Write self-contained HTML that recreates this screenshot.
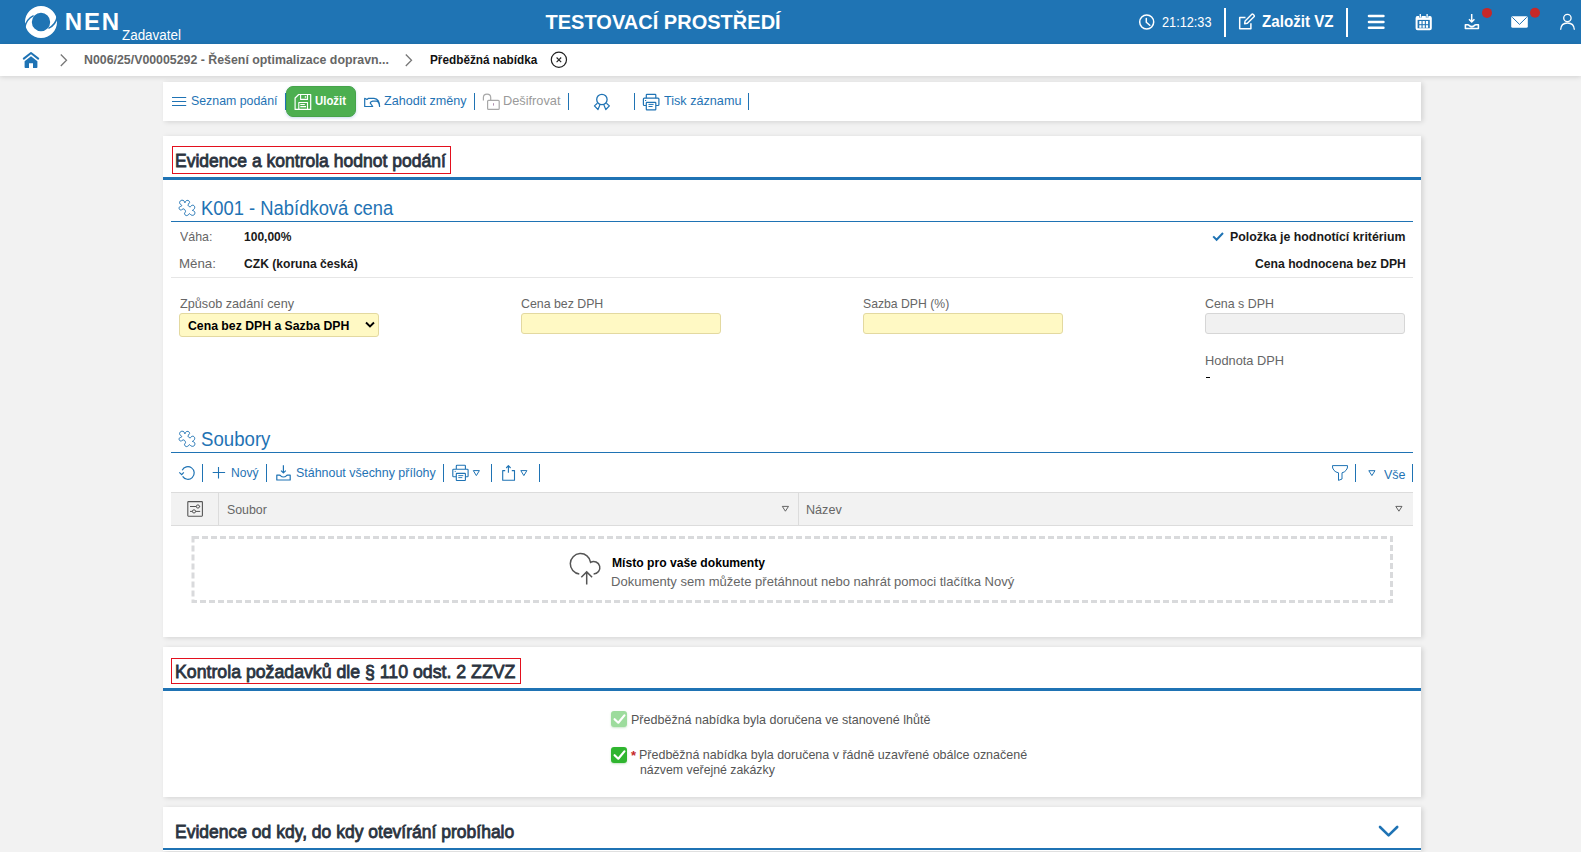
<!DOCTYPE html>
<html lang="cs"><head><meta charset="utf-8"><title>NEN – Předběžná nabídka</title>
<style>
*{box-sizing:border-box;margin:0;padding:0}
html,body{width:1581px;height:852px;overflow:hidden}
body{background:#f2f2f2;font-family:"Liberation Sans",sans-serif;position:relative}
.a{position:absolute}
.t{position:absolute;white-space:nowrap;transform-origin:0 0;font-family:"Liberation Sans",sans-serif}
.card{position:absolute;left:163px;width:1258px;background:#fff;box-shadow:2px 1px 5px rgba(0,0,0,.13)}
.sep{position:absolute;width:1px;background:#1f73b4}
.hsep{position:absolute;width:2px;background:#fff}
.inp{position:absolute;height:21px;width:200px;background:#fff9c4;border:1px solid #e3d9a0;border-radius:3px}
#ov{position:absolute;left:0;top:0;overflow:visible}
</style></head><body>

<!-- header & breadcrumb -->
<div class="a" style="left:0;top:0;width:1581px;height:44px;background:#1f74b4"></div>
<div class="a" style="left:0;top:44px;width:1581px;height:32px;background:#fff;box-shadow:0 1px 5px rgba(0,0,0,.14)"></div>
<div class="hsep" style="left:1224px;top:8px;height:29px"></div>
<div class="hsep" style="left:1346px;top:8px;height:29px"></div>

<!-- toolbar card -->
<div class="card" style="top:82px;height:39px"></div>
<div class="sep" style="left:285px;top:93px;height:17px"></div>
<div class="a" style="left:286px;top:86px;width:70px;height:31px;border-radius:7px;background:#4caf50;border:1px solid #46a34a;box-shadow:0 1px 3px rgba(31,115,180,.25)"></div>
<div class="sep" style="left:474px;top:93px;height:17px"></div>
<div class="sep" style="left:568px;top:93px;height:17px"></div>
<div class="sep" style="left:634px;top:93px;height:17px"></div>
<div class="sep" style="left:748px;top:93px;height:17px"></div>

<!-- card 1 -->
<div class="card" style="top:136px;height:501px"></div>
<div class="a" style="left:172px;top:146px;width:279px;height:28px;border:1px solid #e3101e"></div>
<div class="a" style="left:163px;top:177px;width:1258px;height:3px;background:#1f73b4"></div>
<div class="a" style="left:171px;top:220.5px;width:1242px;height:1.5px;background:#1f73b4"></div>
<div class="a" style="left:171px;top:277px;width:1242px;height:1px;background:#e6e6e6"></div>
<div class="inp" style="left:179px;top:313px;height:24px"></div>
<div class="inp" style="left:521px;top:313px"></div>
<div class="inp" style="left:863px;top:313px"></div>
<div class="inp" style="left:1205px;top:313px;background:#f1f1f1;border-color:#d6d6d6"></div>
<div class="a" style="left:1206px;top:377px;width:4px;height:1px;background:#000"></div>

<div class="a" style="left:171px;top:451.5px;width:1242px;height:1.5px;background:#1f73b4"></div>
<div class="sep" style="left:202px;top:464px;height:18px"></div>
<div class="sep" style="left:266px;top:464px;height:18px"></div>
<div class="sep" style="left:443px;top:464px;height:18px"></div>
<div class="sep" style="left:491px;top:464px;height:18px"></div>
<div class="sep" style="left:539px;top:464px;height:18px"></div>
<div class="sep" style="left:1355px;top:464px;height:18px"></div>
<div class="sep" style="left:1412px;top:464px;height:18px"></div>

<div class="a" style="left:171px;top:492px;width:1242px;height:34px;background:#f2f2f2;border-top:1px solid #dcdcdc;border-bottom:1px solid #dcdcdc"></div>
<div class="a" style="left:218px;top:492px;width:1px;height:34px;background:#dcdcdc"></div>
<div class="a" style="left:798px;top:492px;width:1px;height:34px;background:#dcdcdc"></div>


<!-- card 2 -->
<div class="card" style="top:647px;height:150px"></div>
<div class="a" style="left:171px;top:658px;width:350px;height:26px;border:1px solid #e3101e"></div>
<div class="a" style="left:163px;top:688px;width:1258px;height:3px;background:#1f73b4"></div>
<div class="a" style="left:611px;top:711px;width:16px;height:16px;border-radius:3px;background:#9ddc9d;box-shadow:0 1px 2px rgba(60,160,60,.25)"></div>
<div class="a" style="left:611px;top:747px;width:16px;height:16px;border-radius:3px;background:#2fb52f;box-shadow:0 1px 2px rgba(60,160,60,.3)"></div>

<!-- card 3 -->
<div class="card" style="top:807px;height:44px"></div>
<div class="a" style="left:163px;top:848px;width:1258px;height:2px;background:#1f73b4"></div>

<svg id="ov" width="1581" height="852" viewBox="0 0 1581 852">
<g fill="none" stroke-linejoin="round">
 <!-- logo -->
 <circle cx="41" cy="22" r="12.6" stroke="#fff" stroke-width="6.8"/>
 <path d="M24.6 28 Q26.2 19 33.6 15.6" stroke="#1f74b4" stroke-width="1.5"/>
 <path d="M57.4 16 Q55.8 25 48.4 28.4" stroke="#1f74b4" stroke-width="1.5"/>
 <!-- clock -->
 <circle cx="1146.7" cy="22" r="7" stroke="#fff" stroke-width="1.5"/>
 <path d="M1146.3 18.6 V22.2 L1149.8 25.3" stroke="#fff" stroke-width="1.5" stroke-linecap="round"/>
 <!-- edit -->
 <path d="M1245.5 17.5 H1239.7 V28.7 H1250.9 V23.2" stroke="#fff" stroke-width="1.5"/>
 <path d="M1244.6 23.7 L1245.1 20.9 L1251.6 14.4 Q1252.4 13.6 1253.3 14.5 L1254 15.2 Q1254.8 16 1254 16.8 L1247.4 23.3 Z" stroke="#fff" stroke-width="1.4"/>
 <!-- hamburger -->
 <path d="M1369 16 H1383.4 M1369 22 H1383.4 M1369 27.8 H1383.4" stroke="#fff" stroke-width="2.6" stroke-linecap="round"/>
 <!-- calendar -->
 <rect x="1416.6" y="17" width="14.2" height="12.2" rx="1" stroke="#fff" stroke-width="2"/>
 <rect x="1416.6" y="16.5" width="14.2" height="3.4" fill="#fff" stroke="none"/>
 <path d="M1420.3 13.8 V17.5 M1427.1 13.8 V17.5" stroke="#1f74b4" stroke-width="2.6"/>
 <path d="M1420.3 13.9 V17.5 M1427.1 13.9 V17.5" stroke="#fff" stroke-width="1.3"/>
 <g fill="#fff" stroke="none">
  <rect x="1419.3" y="21" width="2.2" height="3.2"/><rect x="1422.6" y="21" width="2.2" height="3.2"/><rect x="1425.9" y="21" width="2.2" height="3.2"/>
  <rect x="1419.3" y="25.2" width="2.2" height="2.6"/><rect x="1422.6" y="25.2" width="2.2" height="2.6"/><rect x="1425.9" y="25.2" width="2.2" height="2.6"/>
 </g>
 <!-- download tray -->
 <path d="M1471.7 14 V21.8 M1469 19.3 L1471.7 22 L1474.4 19.3" stroke="#fff" stroke-width="1.5"/>
 <path d="M1465.4 24.7 H1467.6 Q1468.6 24.7 1469.4 25.6 Q1470.4 26.6 1471.8 26.6 Q1473.2 26.6 1474.2 25.6 Q1475 24.7 1476 24.7 H1478.4 V28.5 H1465.4 Z" stroke="#fff" stroke-width="1.6"/>
 <circle cx="1487" cy="12.9" r="5" fill="#c62828" stroke="none"/>
 <!-- mail -->
 <rect x="1511.2" y="16.3" width="16.6" height="11.4" rx="1.5" fill="#fff" stroke="none"/>
 <path d="M1512.3 17.3 L1519.5 24.4 L1526.7 17.3" stroke="#1f74b4" stroke-width="1"/>
 <circle cx="1535" cy="12.8" r="5" fill="#c62828" stroke="none"/>
 <!-- user -->
 <circle cx="1567.4" cy="18" r="3.7" stroke="#fff" stroke-width="1.3"/>
 <path d="M1560.6 29.8 Q1561 23 1567.5 23 Q1574 23 1574.4 29.8" stroke="#fff" stroke-width="1.3"/>

 <!-- breadcrumb -->
 <path d="M23.8 58.6 L31 53 L38.2 58.6" stroke="#1f73b4" stroke-width="2" stroke-linecap="round"/>
 <path d="M24.6 61.2 L31 56.2 L37.4 61.2 V67.2 Q37.4 68 36.6 68 H33 V63.2 H29 V68 H25.4 Q24.6 68 24.6 67.2 Z" fill="#1f73b4" stroke="none"/>
 <path d="M60.8 54.5 L66.5 60.2 L60.8 66" stroke="#777" stroke-width="1.3" stroke-linejoin="miter"/>
 <path d="M405.8 54.5 L411.5 60.2 L405.8 66" stroke="#777" stroke-width="1.3" stroke-linejoin="miter"/>
 <circle cx="558.9" cy="59.8" r="7.6" stroke="#222" stroke-width="1.2"/>
 <path d="M556.6 57.5 L561.2 62.1 M561.2 57.5 L556.6 62.1" stroke="#222" stroke-width="1.1"/>

 <!-- toolbar -->
 <path d="M172 97.5 H186.2 M172 101.5 H186.2 M172 105.5 H186.2" stroke="#1f73b4" stroke-width="1.1"/>
 <path d="M295.1 98 L298.7 94.5 H310.7 V109.4 H295.1 Z" stroke="#fff" stroke-width="1.2"/>
 <path d="M300.6 94.5 V99.4 H307.5 V94.5" stroke="#fff" stroke-width="1.1"/>
 <rect x="304.8" y="96.2" width="1.4" height="1.5" fill="#fff" stroke="none"/>
 <path d="M298.8 109.4 V102.5 H307.5 V109.4 M300.3 104.5 H304.8 M300.3 106.6 H306" stroke="#fff" stroke-width="1.1"/>
 <path d="M364.7 106.5 V98.3 L367 99.5 L368.5 98.3 H374 Q379.6 99 379.6 106.5 Q379 101 376 101.2 H372.8 Q370.2 101.8 370.3 103.2 L372.7 106.5 Z" stroke="#1f73b4" stroke-width="1.2"/>
 <path d="M483.4 100.6 V97.5 Q483.4 94.1 487 94.1 Q490.7 94.1 490.7 97.5 V100.3" stroke="#a8a8a8" stroke-width="1.2"/>
 <rect x="487.6" y="100.3" width="11.6" height="9.1" rx="1" fill="#fff" stroke="#a8a8a8" stroke-width="1.2"/>
 <path d="M493.5 103.2 V105.6" stroke="#b090b0" stroke-width="1"/>
 <circle cx="601.9" cy="99.5" r="5.2" stroke="#1f73b4" stroke-width="1.3"/>
 <path d="M597.4 103.3 L594.4 105.9 L598 109.5 L599.9 105 M606.4 103.3 L609.4 105.9 L605.8 109.5 L603.9 105" stroke="#1f73b4" stroke-width="1.2"/>
 <path d="M646.3 98.2 V95 Q646.3 94.3 647 94.3 H655.1 Q655.8 94.3 655.8 95 V98.2" stroke="#1f73b4" stroke-width="1.2"/>
 <path d="M646.2 105.5 H644.3 Q643.4 105.5 643.4 104.6 V99.1 Q643.4 98.2 644.3 98.2 H658 Q658.9 98.2 658.9 99.1 V104.6 Q658.9 105.5 658 105.5 H655.8" stroke="#1f73b4" stroke-width="1.2"/>
 <rect x="646.3" y="102.3" width="9.5" height="7.5" rx="0.6" fill="#fff" stroke="#1f73b4" stroke-width="1.2"/>
 <path d="M648.5 104.4 H653.6 M648.5 106.5 H652.6 M645 100.5 H646.2" stroke="#1f73b4" stroke-width="1"/>

 <!-- card1 icons -->
 <path d="M181.94 205.53 C181.94 205.53 179.88 203.98 179.62 203.20 C179.36 202.43 179.96 201.37 180.39 200.88 C180.82 200.38 181.60 200.23 182.20 200.23 C182.80 200.23 183.60 200.51 184.01 200.88 C184.42 201.24 184.48 202.08 184.66 202.43 C184.83 202.77 185.04 202.94 185.04 202.94 C185.04 202.94 185.22 201.82 185.56 201.39 C185.91 200.96 186.55 200.45 187.11 200.36 C187.67 200.27 188.49 200.57 188.92 200.88 C189.35 201.18 189.65 201.82 189.70 202.17 C189.74 202.51 189.39 202.60 189.18 202.94 C188.96 203.29 188.58 203.80 188.40 204.24 C188.23 204.67 188.02 205.14 188.14 205.53 C188.27 205.91 188.79 206.35 189.18 206.56 C189.57 206.78 190.47 206.82 190.47 206.82 C190.47 206.82 191.03 205.79 191.50 205.53 C191.98 205.27 192.80 205.10 193.31 205.27 C193.83 205.44 194.39 206.09 194.60 206.56 C194.82 207.03 194.73 207.64 194.60 208.11 C194.48 208.58 194.22 209.02 193.83 209.40 C193.44 209.79 192.28 210.44 192.28 210.44 C192.28 210.44 193.40 210.61 193.83 210.95 C194.26 211.30 194.78 211.90 194.86 212.50 C194.95 213.11 194.73 214.10 194.35 214.57 C193.96 215.04 193.10 215.30 192.54 215.35 C191.98 215.39 191.50 215.13 190.99 214.83 C190.47 214.53 189.44 213.54 189.44 213.54 C189.44 213.54 188.88 214.48 188.40 214.83 C187.93 215.17 187.15 215.60 186.59 215.60 C186.03 215.60 185.39 215.22 185.04 214.83 C184.70 214.44 184.44 213.84 184.53 213.28 C184.61 212.72 185.56 212.12 185.56 211.47 C185.56 210.82 184.96 209.83 184.53 209.40 C184.10 208.97 183.45 208.80 182.98 208.89 C182.50 208.97 181.68 209.92 181.68 209.92 C181.68 209.92 180.57 210.18 180.13 209.92 C179.70 209.66 179.19 208.89 179.10 208.37 C179.01 207.85 179.27 207.16 179.62 206.82 C179.96 206.47 180.78 206.52 181.17 206.30 C181.56 206.09 181.94 205.53 181.94 205.53 Z" stroke="#1f73b4" stroke-width="1"/>
 <path d="M1213.2 236.4 L1216.6 239.8 L1223 233" stroke="#1f73b4" stroke-width="2" stroke-linejoin="miter"/>
 <path d="M366 322.5 L370 326.5 L374 322.5" stroke="#000" stroke-width="1.9" stroke-linejoin="miter"/>

 <!-- soubory -->
 <path d="M181.94 436.53 C181.94 436.53 179.88 434.98 179.62 434.20 C179.36 433.43 179.96 432.37 180.39 431.88 C180.82 431.38 181.60 431.23 182.20 431.23 C182.80 431.23 183.60 431.51 184.01 431.88 C184.42 432.24 184.48 433.08 184.66 433.43 C184.83 433.77 185.04 433.94 185.04 433.94 C185.04 433.94 185.22 432.82 185.56 432.39 C185.91 431.96 186.55 431.45 187.11 431.36 C187.67 431.27 188.49 431.57 188.92 431.88 C189.35 432.18 189.65 432.82 189.70 433.17 C189.74 433.51 189.39 433.60 189.18 433.94 C188.96 434.29 188.58 434.80 188.40 435.24 C188.23 435.67 188.02 436.14 188.14 436.53 C188.27 436.91 188.79 437.35 189.18 437.56 C189.57 437.78 190.47 437.82 190.47 437.82 C190.47 437.82 191.03 436.79 191.50 436.53 C191.98 436.27 192.80 436.10 193.31 436.27 C193.83 436.44 194.39 437.09 194.60 437.56 C194.82 438.03 194.73 438.64 194.60 439.11 C194.48 439.58 194.22 440.02 193.83 440.40 C193.44 440.79 192.28 441.44 192.28 441.44 C192.28 441.44 193.40 441.61 193.83 441.95 C194.26 442.30 194.78 442.90 194.86 443.50 C194.95 444.11 194.73 445.10 194.35 445.57 C193.96 446.04 193.10 446.30 192.54 446.35 C191.98 446.39 191.50 446.13 190.99 445.83 C190.47 445.53 189.44 444.54 189.44 444.54 C189.44 444.54 188.88 445.48 188.40 445.83 C187.93 446.17 187.15 446.60 186.59 446.60 C186.03 446.60 185.39 446.22 185.04 445.83 C184.70 445.44 184.44 444.84 184.53 444.28 C184.61 443.72 185.56 443.12 185.56 442.47 C185.56 441.82 184.96 440.83 184.53 440.40 C184.10 439.97 183.45 439.80 182.98 439.89 C182.50 439.97 181.68 440.92 181.68 440.92 C181.68 440.92 180.57 441.18 180.13 440.92 C179.70 440.66 179.19 439.89 179.10 439.37 C179.01 438.85 179.27 438.16 179.62 437.82 C179.96 437.47 180.78 437.52 181.17 437.30 C181.56 437.09 181.94 436.53 181.94 436.53 Z" stroke="#1f73b4" stroke-width="1"/>
 <path d="M182.2 470.3 A6.3 6.3 0 1 1 182.6 476.4" stroke="#1f73b4" stroke-width="1.2" stroke-linecap="butt"/>
 <path d="M179.3 472.4 L181.7 474.6 L183.8 472.3" stroke="#1f73b4" stroke-width="1.2" stroke-linejoin="miter"/>
 <path d="M218.5 466.9 V478.6 M212.7 472.5 H225.1" stroke="#1f73b4" stroke-width="1.1"/>
 <path d="M283.4 465.3 V472.6 M281 470.6 L283.4 472.9 L285.8 470.6" stroke="#1f73b4" stroke-width="1.2"/>
 <path d="M276.8 475.2 H279.4 Q280.2 475.2 280.8 475.9 Q281.8 477 283.5 477 Q285.2 477 286.2 475.9 Q286.8 475.2 287.6 475.2 H290.2 V480 H276.8 Z" stroke="#1f73b4" stroke-width="1.2"/>
 <path d="M456.3 469.1 V466 Q456.3 465.3 457 465.3 H464.7 Q465.4 465.3 465.4 466 V469.1" stroke="#1f73b4" stroke-width="1.1"/>
 <path d="M456.2 476.7 H453.6 Q452.8 476.7 452.8 475.9 V470 Q452.8 469.2 453.6 469.2 H467.3 Q468.1 469.2 468.1 470 V475.9 Q468.1 476.7 467.3 476.7 H465.4" stroke="#1f73b4" stroke-width="1.1"/>
 <rect x="456.3" y="473.4" width="9.1" height="7.1" rx="0.5" fill="#fff" stroke="#1f73b4" stroke-width="1.1"/>
 <path d="M458.3 475.6 H463.3 M458.3 477.6 H462.3 M454.7 471.4 H455.8" stroke="#1f73b4" stroke-width="0.9"/>
 <path d="M473.3 470.6 H479.4 L476.35 475.6 Z" stroke="#1f73b4" stroke-width="1"/>
 <path d="M505.2 470.6 H502.7 V480.3 H514.5 V470.6 H511.8" stroke="#1f73b4" stroke-width="1.1"/>
 <path d="M508.4 472.8 V465.8 M506.2 468 L508.4 465.7 L510.6 468" stroke="#1f73b4" stroke-width="1.1"/>
 <path d="M520.8 470.6 H526.9 L523.85 475.6 Z" stroke="#1f73b4" stroke-width="1"/>
 <path d="M1332.5 465.6 H1347.5 Q1348 468 1346 470.4 Q1344.5 472.3 1342 472.8 V479 L1338.5 480.4 V472.8 Q1335.6 472.3 1334 470.4 Q1332 468 1332.5 465.6 Z" stroke="#1f73b4" stroke-width="1"/>
 <path d="M1368.8 470.7 H1375 L1371.9 475.6 Z" stroke="#1f73b4" stroke-width="1"/>

 <!-- table header -->
 <rect x="187.8" y="501.6" width="14.6" height="14.6" rx="0.6" stroke="#555" stroke-width="1.1"/>
 <path d="M190 506.5 H200.2 M190 511.4 H200.2" stroke="#555" stroke-width="1"/>
 <circle cx="197.9" cy="506.5" r="1.6" fill="#f2f2f2" stroke="#555" stroke-width="1"/>
 <circle cx="194" cy="511.4" r="1.6" fill="#f2f2f2" stroke="#555" stroke-width="1"/>
 <path d="M782.3 506.4 H788.5 L785.4 511.2 Z" stroke="#555" stroke-width="0.9"/>
 <path d="M1395.8 506.4 H1402 L1398.9 511.2 Z" stroke="#555" stroke-width="0.9"/>

 <rect x="193" y="537.5" width="1198.5" height="64" stroke="#d9dadc" stroke-width="3" stroke-dasharray="6 3" stroke-linejoin="miter"/>
 <!-- cloud -->
 <path d="M579.3 573.9 A10.2 10.2 0 1 1 590.6 562.3 A6.2 6.2 0 1 1 593.6 573.9" stroke="#555" stroke-width="1.5" stroke-linejoin="miter"/>
 <path d="M586.7 571.8 V584.5 M581.3 577.3 L586.7 571.9 L592.1 577.3" stroke="#555" stroke-width="1.5" stroke-linejoin="miter"/>

 <!-- checkboxes -->
 <path d="M614.6 719.2 L618.3 722.7 L624.4 715.4" stroke="#fff" stroke-width="2.2" stroke-linecap="round"/>
 <path d="M614.6 755.2 L618.3 758.7 L624.4 751.4" stroke="#fff" stroke-width="2.2" stroke-linecap="round"/>

 <!-- chevron down -->
 <path d="M1380 827 L1388.6 835.4 L1397.2 827" stroke="#1f73b4" stroke-width="2.6" stroke-linecap="round" stroke-linejoin="round"/>
</g>
</svg>
<span class="t" style="left:631px;top:748.5px;font-size:13px;line-height:13px;color:#c62828;font-weight:bold">*</span>

<span class="t" style="left:64.70px;top:9.60px;font-size:24px;line-height:24px;color:#fff;font-weight:bold;letter-spacing:1.880px">NEN</span>
<span class="t" style="left:122.00px;top:28.00px;font-size:14px;line-height:14px;color:#fff;font-weight:normal;transform:scaleX(0.9581)">Zadavatel</span>
<span class="t" style="left:545.50px;top:12.20px;font-size:20px;line-height:20px;color:#fff;font-weight:bold;letter-spacing:0.017px">TESTOVACÍ PROSTŘEDÍ</span>
<span class="t" style="left:1162.30px;top:15.10px;font-size:14px;line-height:14px;color:#fff;font-weight:normal;transform:scaleX(0.9084)">21:12:33</span>
<span class="t" style="left:1262.00px;top:14.10px;font-size:16px;line-height:16px;color:#fff;font-weight:bold;transform:scaleX(0.9475)">Založit VZ</span>
<span class="t" style="left:84.20px;top:53.10px;font-size:13px;line-height:13px;color:#666;font-weight:bold;transform:scaleX(0.9503)">N006/25/V00005292 - Řešení optimalizace dopravn...</span>
<span class="t" style="left:429.90px;top:53.10px;font-size:13px;line-height:13px;color:#111;font-weight:bold;transform:scaleX(0.9065)">Předběžná nabídka</span>
<span class="t" style="left:191.20px;top:94.00px;font-size:13px;line-height:13px;color:#1f73b4;font-weight:normal;transform:scaleX(0.9502)">Seznam podání</span>
<span class="t" style="left:315.40px;top:94.00px;font-size:13px;line-height:13px;color:#fff;font-weight:bold;transform:scaleX(0.8765)">Uložit</span>
<span class="t" style="left:384.00px;top:94.00px;font-size:13px;line-height:13px;color:#1f73b4;font-weight:normal;transform:scaleX(0.9678)">Zahodit změny</span>
<span class="t" style="left:502.92px;top:94.00px;font-size:13px;line-height:13px;color:#9a9a9a;font-weight:normal;transform:scaleX(0.9826)">Dešifrovat</span>
<span class="t" style="left:663.50px;top:94.00px;font-size:13px;line-height:13px;color:#1f73b4;font-weight:normal;transform:scaleX(0.9713)">Tisk záznamu</span>
<span class="t" style="left:175.08px;top:151.00px;font-size:19px;line-height:19px;color:#2b3440;font-weight:normal;transform:scaleX(0.9220);-webkit-text-stroke:0.85px #2b3440">Evidence a kontrola hodnot podání</span>
<span class="t" style="left:200.98px;top:197.80px;font-size:20px;line-height:20px;color:#1f73b4;font-weight:normal;transform:scaleX(0.9201)">K001 - Nabídková cena</span>
<span class="t" style="left:179.70px;top:229.80px;font-size:13px;line-height:13px;color:#666;font-weight:normal;transform:scaleX(0.9532)">Váha:</span>
<span class="t" style="left:244.00px;top:229.80px;font-size:13px;line-height:13px;color:#1a1a1a;font-weight:bold;transform:scaleX(0.9254)">100,00%</span>
<span class="t" style="left:178.68px;top:256.80px;font-size:13px;line-height:13px;color:#666;font-weight:normal;transform:scaleX(1.0226)">Měna:</span>
<span class="t" style="left:243.60px;top:256.80px;font-size:13px;line-height:13px;color:#1a1a1a;font-weight:bold;transform:scaleX(0.9313)">CZK (koruna česká)</span>
<span class="t" style="left:1230.00px;top:230.00px;font-size:13px;line-height:13px;color:#1a1a1a;font-weight:bold;transform:scaleX(0.9492)">Položka je hodnotící kritérium</span>
<span class="t" style="left:1254.50px;top:256.80px;font-size:13px;line-height:13px;color:#1a1a1a;font-weight:bold;transform:scaleX(0.9366)">Cena hodnocena bez DPH</span>
<span class="t" style="left:179.50px;top:296.80px;font-size:13px;line-height:13px;color:#666;font-weight:normal;transform:scaleX(0.9738)">Způsob zadání ceny</span>
<span class="t" style="left:188.30px;top:318.80px;font-size:13px;line-height:13px;color:#000;font-weight:bold;transform:scaleX(0.9419)">Cena bez DPH a Sazba DPH</span>
<span class="t" style="left:521.40px;top:296.80px;font-size:13px;line-height:13px;color:#666;font-weight:normal;transform:scaleX(0.9488)">Cena bez DPH</span>
<span class="t" style="left:863.10px;top:296.80px;font-size:13px;line-height:13px;color:#666;font-weight:normal;transform:scaleX(0.9396)">Sazba DPH (%)</span>
<span class="t" style="left:1205.00px;top:296.80px;font-size:13px;line-height:13px;color:#666;font-weight:normal;transform:scaleX(0.9546)">Cena s DPH</span>
<span class="t" style="left:1204.61px;top:354.00px;font-size:13px;line-height:13px;color:#666;font-weight:normal;transform:scaleX(0.9858)">Hodnota DPH</span>
<span class="t" style="left:201.20px;top:429.10px;font-size:20px;line-height:20px;color:#1f73b4;font-weight:normal;transform:scaleX(0.9316)">Soubory</span>
<span class="t" style="left:230.97px;top:466.00px;font-size:13px;line-height:13px;color:#1f73b4;font-weight:normal;transform:scaleX(0.9307)">Nový</span>
<span class="t" style="left:295.80px;top:466.00px;font-size:13px;line-height:13px;color:#1f73b4;font-weight:normal;transform:scaleX(0.9571)">Stáhnout všechny přílohy</span>
<span class="t" style="left:1384.00px;top:467.50px;font-size:13px;line-height:13px;color:#1f73b4;font-weight:normal;transform:scaleX(0.9607)">Vše</span>
<span class="t" style="left:227.00px;top:503.40px;font-size:13px;line-height:13px;color:#666;font-weight:normal;transform:scaleX(0.9509)">Soubor</span>
<span class="t" style="left:805.63px;top:503.40px;font-size:13px;line-height:13px;color:#666;font-weight:normal;transform:scaleX(0.9684)">Název</span>
<span class="t" style="left:612.20px;top:555.60px;font-size:13px;line-height:13px;color:#000;font-weight:bold;transform:scaleX(0.9335)">Místo pro vaše dokumenty</span>
<span class="t" style="left:611.20px;top:574.90px;font-size:13px;line-height:13px;color:#666;font-weight:normal;transform:scaleX(1.0020)">Dokumenty sem můžete přetáhnout nebo nahrát pomoci tlačítka Nový</span>
<span class="t" style="left:175.07px;top:661.90px;font-size:19px;line-height:19px;color:#2b3440;font-weight:normal;transform:scaleX(0.9323);-webkit-text-stroke:0.85px #2b3440">Kontrola požadavků dle § 110 odst. 2 ZZVZ</span>
<span class="t" style="left:630.64px;top:712.90px;font-size:13px;line-height:13px;color:#555;font-weight:normal;transform:scaleX(0.9633)">Předběžná nabídka byla doručena ve stanovené lhůtě</span>
<span class="t" style="left:638.54px;top:747.80px;font-size:13px;line-height:13px;color:#555;font-weight:normal;transform:scaleX(0.9606)">Předběžná nabídka byla doručena v řádně uzavřené obálce označené</span>
<span class="t" style="left:639.50px;top:762.60px;font-size:13px;line-height:13px;color:#555;font-weight:normal;transform:scaleX(0.9472)">názvem veřejné zakázky</span>
<span class="t" style="left:175.08px;top:821.80px;font-size:19px;line-height:19px;color:#2b3440;font-weight:normal;transform:scaleX(0.9212);-webkit-text-stroke:0.85px #2b3440">Evidence od kdy, do kdy otevírání probíhalo</span>
</body></html>
